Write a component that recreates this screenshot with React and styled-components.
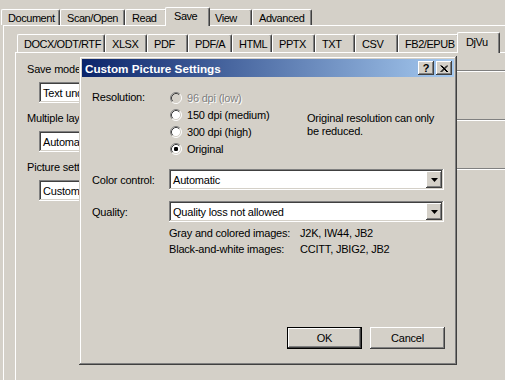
import React from "react";
import styled, { createGlobalStyle } from "styled-components";

const FACE = "#d4d0c8";
const RAISED =
  "inset -1px -1px #404040, inset 1px 1px #fff, inset -2px -2px #808080, inset 2px 2px #d4d0c8";
const SUNKEN =
  "inset -1px -1px #fff, inset 1px 1px #808080, inset -2px -2px #d4d0c8, inset 2px 2px #404040";

const GlobalStyle = createGlobalStyle`
  html, body {
    margin: 0;
    padding: 0;
    background: ${FACE};
  }
  body {
    font-family: "Liberation Sans", Arial, sans-serif;
    font-size: 11px;
    letter-spacing: -0.2px;
    color: #000;
  }
`;

const Screen = styled.div`
  position: relative;
  width: 505px;
  height: 380px;
  overflow: hidden;
  background: ${FACE};
`;

const TabStrip = styled.div`
  display: flex;
  align-items: flex-end;
  height: ${(p) => p.$h}px;
  margin-top: ${(p) => p.$top}px;
  padding-left: ${(p) => p.$pad}px;
`;

const Tab = styled.div`
  box-sizing: border-box;
  flex: none;
  position: relative;
  z-index: ${(p) => (p.$active ? 1 : 0)};
  width: ${(p) => p.$w + (p.$active ? 4 : 0)}px;
  height: ${(p) => p.$h + (p.$active ? 3 : 0)}px;
  margin: ${(p) => (p.$active ? "0 -2px -1px" : "0")};
  padding: ${(p) => (p.$active ? "0 0 2px 8px" : "0 0 0 6px")};
  display: flex;
  align-items: center;
  white-space: nowrap;
  letter-spacing: -0.45px;
  background: ${FACE};
  border-top: 1px solid #fff;
  border-left: 1px solid #fff;
  border-right: 1px solid #404040;
  box-shadow: inset -1px 0 #808080;
  border-radius: 2px 2px 0 0;
`;

const OuterPage = styled.div`
  margin-left: 3px;
  height: 400px;
  border-top: 1px solid #fff;
  border-left: 1px solid #fff;
`;

const InnerArea = styled.div`
  margin-left: 11px;
`;

const InnerPage = styled.div`
  height: 400px;
  padding: 9px 0 0 11px;
  border-top: 1px solid #fff;
  border-left: 1px solid #fff;
`;

const GroupHead = styled.div`
  display: flex;
  align-items: center;
  height: 14px;
  white-space: nowrap;
`;

const EtchedLine = styled.div`
  flex: 1;
  margin: 3px 0 0 6px;
  border-top: 1px solid #808080;
  border-bottom: 1px solid #fff;
`;

const PageField = styled.div`
  box-sizing: border-box;
  width: 42px;
  height: 21px;
  margin: 6px 0 8px 12px;
  padding: 0 2px 0 4px;
  display: flex;
  align-items: center;
  overflow: hidden;
  white-space: nowrap;
  background: #fff;
  box-shadow: ${SUNKEN};
`;

const Dialog = styled.div`
  position: absolute;
  left: 79px;
  top: 56px;
  width: 378px;
  height: 309px;
  box-sizing: border-box;
  padding: 3px;
  display: flex;
  flex-direction: column;
  background: ${FACE};
  box-shadow: inset -1px -1px #404040, inset 1px 1px #d4d0c8,
    inset -2px -2px #808080, inset 2px 2px #fff;
`;

const TitleBar = styled.div`
  height: 18px;
  display: flex;
  align-items: center;
  padding: 0 2px 0 3px;
  background: linear-gradient(to right, #0a246a, #a6caf0);
  color: #fff;
  font-size: 11.7px;
  font-weight: bold;
  letter-spacing: 0;
`;

const TitleText = styled.span`
  flex: 1;
`;

const TitleButton = styled.div`
  box-sizing: border-box;
  width: 16px;
  height: 14px;
  margin-left: 2px;
  display: flex;
  align-items: center;
  justify-content: center;
  background: ${FACE};
  box-shadow: ${RAISED};
  color: #000;
  font-size: 11px;
  font-weight: bold;
  line-height: 1;
`;

const Body = styled.div`
  flex: 1;
  display: flex;
  flex-direction: column;
  padding: 12px 10px 13px 10px;
`;

const ResolutionGrid = styled.div`
  display: grid;
  grid-template-columns: 77px 138px 1fr;
`;

const FieldLabel = styled.div`
  line-height: 17px;
`;

const RadioList = styled.div`
  display: flex;
  flex-direction: column;
`;

const RadioRow = styled.div`
  display: flex;
  align-items: center;
  gap: 5px;
  height: 17px;
  padding-left: 1px;
  color: ${(p) => (p.$disabled ? "#808080" : "#000")};
  text-shadow: ${(p) => (p.$disabled ? "1px 1px #fff" : "none")};
`;

const Note = styled.div`
  margin-top: 23px;
  line-height: 13px;
`;

const ControlRow = styled.div`
  display: grid;
  grid-template-columns: 77px 1fr;
  align-items: center;
  margin-top: ${(p) => p.$mt}px;
`;

const Select = styled.div`
  box-sizing: border-box;
  height: 21px;
  padding: 2px;
  display: flex;
  align-items: center;
  background: #fff;
  box-shadow: ${SUNKEN};
`;

const SelectText = styled.span`
  flex: 1;
  padding-left: 2px;
`;

const DropButton = styled.div`
  box-sizing: border-box;
  width: 16px;
  height: 17px;
  display: flex;
  align-items: center;
  justify-content: center;
  background: ${FACE};
  box-shadow: ${RAISED};
`;

const InfoGrid = styled.div`
  display: grid;
  grid-template-columns: 131px 1fr;
  margin: 3px 0 0 77px;
  line-height: 16px;
`;

const ButtonRow = styled.div`
  margin-top: auto;
  display: flex;
  justify-content: flex-end;
  gap: 8px;
  margin-right: -1px;
`;

const PushButton = styled.button`
  box-sizing: border-box;
  width: 75px;
  height: 22px;
  padding: 0;
  font: inherit;
  letter-spacing: inherit;
  color: #000;
  background: ${FACE};
  border: ${(p) => (p.$default ? "1px solid #000" : "none")};
  box-shadow: ${(p) =>
    p.$default
      ? "inset -1px -1px #404040, inset 1px 1px #fff, inset -2px -2px #808080"
      : RAISED};
`;

const Radio = ({ checked, disabled }) => (
  <svg width="12" height="12" viewBox="0 0 12 12">
    <circle cx="6" cy="6" r="5" fill={disabled ? FACE : "#fff"} />
    <path d="M2.11 9.89A5.5 5.5 0 0 1 9.89 2.11" fill="none" stroke="#808080" />
    <path d="M9.89 2.11A5.5 5.5 0 0 1 2.11 9.89" fill="none" stroke="#fff" />
    <path d="M2.82 9.18A4.5 4.5 0 0 1 9.18 2.82" fill="none" stroke="#404040" />
    <path d="M9.18 2.82A4.5 4.5 0 0 1 2.82 9.18" fill="none" stroke={FACE} />
    {checked && <rect x="4" y="4" width="4" height="4" rx="1.2" fill="#000" />}
  </svg>
);

const DownArrow = () => (
  <svg width="7" height="4" viewBox="0 0 7 4">
    <path d="M0 0h7L3.5 4z" fill="#000" />
  </svg>
);

const CloseGlyph = () => (
  <svg width="8" height="7" viewBox="0 0 8 7">
    <path d="M0.5 0.5L7 7M1.5 0.5L8 7M7 0.5L0.5 7M8 0.5L1.5 7" stroke="#000" strokeWidth="1" fill="none" />
  </svg>
);

const OUTER_TABS = [
  { name: "Document", w: 59 },
  { name: "Scan/Open", w: 65 },
  { name: "Read", w: 42 },
  { name: "Save", w: 41, active: true },
  { name: "View", w: 44 },
  { name: "Advanced", w: 60 },
];

const INNER_TABS = [
  { name: "DOCX/ODT/RTF", w: 88 },
  { name: "XLSX", w: 42 },
  { name: "PDF", w: 41 },
  { name: "PDF/A", w: 44 },
  { name: "HTML", w: 40 },
  { name: "PPTX", w: 43 },
  { name: "TXT", w: 40 },
  { name: "CSV", w: 43 },
  { name: "FB2/EPUB", w: 61 },
  { name: "DjVu", w: 39, active: true },
];

const PAGE_GROUPS = [
  { label: "Save mode", value: "Text under the page image" },
  { label: "Multiple layouts", value: "Automatic" },
  { label: "Picture settings", value: "Custom..." },
];

const RESOLUTIONS = [
  { label: "96 dpi (low)", disabled: true },
  { label: "150 dpi (medium)" },
  { label: "300 dpi (high)" },
  { label: "Original", checked: true },
];

const App = () => {
  return (
    <Screen>
      <GlobalStyle />
      <TabStrip $h={18} $top={7} $pad={1}>
        {OUTER_TABS.map((t) => (
          <Tab key={t.name} $w={t.w} $h={16} $active={t.active}>
            {t.name}
          </Tab>
        ))}
      </TabStrip>
      <OuterPage>
        <InnerArea>
          <TabStrip $h={20} $top={6} $pad={2}>
            {INNER_TABS.map((t) => (
              <Tab key={t.name} $w={t.w} $h={18} $active={t.active}>
                {t.name}
              </Tab>
            ))}
          </TabStrip>
          <InnerPage>
            {PAGE_GROUPS.map((g) => (
              <div key={g.label}>
                <GroupHead>
                  {g.label}
                  <EtchedLine />
                </GroupHead>
                <PageField>{g.value}</PageField>
              </div>
            ))}
          </InnerPage>
        </InnerArea>
      </OuterPage>

      <Dialog>
        <TitleBar>
          <TitleText>Custom Picture Settings</TitleText>
          <TitleButton>?</TitleButton>
          <TitleButton>
            <CloseGlyph />
          </TitleButton>
        </TitleBar>
        <Body>
          <ResolutionGrid>
            <FieldLabel>Resolution:</FieldLabel>
            <RadioList>
              {RESOLUTIONS.map((r) => (
                <RadioRow key={r.label} $disabled={r.disabled}>
                  <Radio checked={r.checked} disabled={r.disabled} />
                  {r.label}
                </RadioRow>
              ))}
            </RadioList>
            <Note>
              Original resolution can only
              <br />
              be reduced.
            </Note>
          </ResolutionGrid>

          <ControlRow $mt={12}>
            <span>Color control:</span>
            <Select>
              <SelectText>Automatic</SelectText>
              <DropButton>
                <DownArrow />
              </DropButton>
            </Select>
          </ControlRow>
          <ControlRow $mt={11}>
            <span>Quality:</span>
            <Select>
              <SelectText>Quality loss not allowed</SelectText>
              <DropButton>
                <DownArrow />
              </DropButton>
            </Select>
          </ControlRow>

          <InfoGrid>
            <span>Gray and colored images:</span>
            <span>J2K, IW44, JB2</span>
            <span>Black-and-white images:</span>
            <span>CCITT, JBIG2, JB2</span>
          </InfoGrid>

          <ButtonRow>
            <PushButton $default>OK</PushButton>
            <PushButton>Cancel</PushButton>
          </ButtonRow>
        </Body>
      </Dialog>
    </Screen>
  );
};

export default App;
